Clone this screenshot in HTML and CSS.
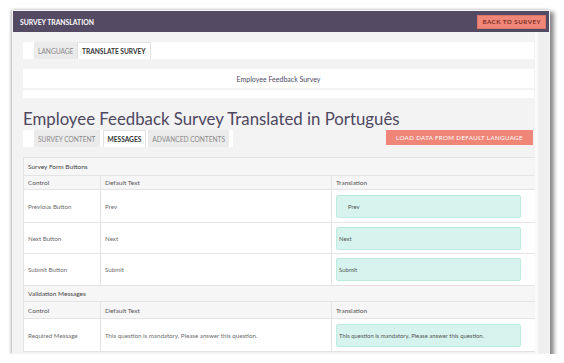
FILE: index.html
```html
<!DOCTYPE html>
<html lang="en">
<head>
  <meta charset="utf-8" />
  <meta name="viewport" content="width=device-width, initial-scale=1" />
  <title>Survey Translation</title>
  <link rel="stylesheet" href="styles.css">
</head>
<body>
  <div class="frame">
    <div class="topbar">
      <span class="title">SURVEY TRANSLATION</span>
      <button class="back">BACK TO SURVEY</button>
    </div>

    <div class="body">
      <div class="content">
        <div class="tabs">
          <div class="tab">LANGUAGE</div>
          <div class="tab active">TRANSLATE SURVEY</div>
        </div>

        <div class="survey-name">Employee Feedback Survey</div>
        <div class="blank"></div>

        <h1>Employee Feedback Survey Translated in Português</h1>

        <div class="toolbar">
          <div class="tabs sub">
            <div class="tab">SURVEY CONTENT</div>
            <div class="tab active">MESSAGES</div>
            <div class="tab">ADVANCED CONTENTS</div>
          </div>
          <button class="load">LOAD DATA FROM DEFAULT LANGUAGE</button>
        </div>

        <table class="grid">
          <colgroup>
            <col class="c1"><col class="c2"><col class="c3">
          </colgroup>
          <tr class="group g1"><td colspan="3">Survey Form Buttons</td></tr>
          <tr class="head h1"><td>Control</td><td>Default Text</td><td>Translation</td></tr>
          <tr class="r1">
            <td>Previous Button</td><td>Prev</td>
            <td><div class="field indent">Prev</div></td>
          </tr>
          <tr class="r2">
            <td>Next Button</td><td>Next</td>
            <td><div class="field">Next</div></td>
          </tr>
          <tr class="r3">
            <td>Submit Button</td><td>Submit</td>
            <td><div class="field">Submit</div></td>
          </tr>
          <tr class="group g2"><td colspan="3">Validation Messages</td></tr>
          <tr class="head h2"><td>Control</td><td>Default Text</td><td>Translation</td></tr>
          <tr class="r4">
            <td>Required Message</td><td>This question is mandatory, Please answer this question.</td>
            <td><div class="field">This question is mandatory, Please answer this question.</div></td>
          </tr>
        </table>
      </div>
      <div class="scroll"></div>
    </div>
  </div>
</body>
</html>
```

FILE: styles.css
```css
:root { --purple:#554a64; --salmon:#ef8678; --line:#e4e4e4; --text:#4b4558; --muted:#6d6d6d; }
html, body { margin:0; background:#fff; overflow:hidden; }
body { font-family: Lato, "Open Sans", sans-serif; color:var(--text); }

.frame { margin: 10px 0 0 12px; width: 536px; height: 342px; border: 1px solid #f4f4f4; overflow: hidden; background:#f3f3f3;
  box-shadow: 3px 3px 4px 1px rgba(0,0,0,0.45), -1px 0 3px rgba(0,0,0,0.25); }

.topbar { height: 21px; background: var(--purple); display:flex; align-items:center; justify-content:space-between; padding: 0 3px 0 7px; }
.title { color:#fff; font-size: 6.8px; font-weight: 700; }
button { font-family: inherit; border: 0; cursor: pointer; }
.back { background: var(--salmon); color:#7b2f26; font-size: 6.2px; font-weight: 700; letter-spacing: 0.5px; height: 14px; padding: 0 4px; border: 1px solid #d9776a; }

.body { display:flex; height: 321px; }
.content { flex: 1; padding: 10px 0 0 10px; min-width: 0; }
.scroll { width: 11px; border-left: 3px solid #fafafa; background:#efefef; margin-left: 1px; }

.tabs { display:flex; background:#fff; height: 17px; padding-left: 11px; }
.tab { font-size: 6.6px; color:#8a8a8a; background:#ebebeb; display:flex; align-items:center; padding: 0 4px; }
.tab.active { background:#fff; color:#333; font-weight: 700; border: 1px solid #e2e2e2; border-bottom: 0; }
.tabs .tab:first-child { width: 35px; }

.survey-name { margin-top: 10px; background:#fff; height: 19px; display:flex; align-items:center; justify-content:center; font-size: 7px; color:#4d4862; }
.blank { margin-top: 2px; height: 8px; background:#fff; }

h1 { margin: 9px 0 0; font-size: 16.8px; font-weight: 400; color:#4d4760; line-height: 23px; }

.toolbar { display:flex; justify-content:space-between; align-items:flex-start; padding-right: 1px; }
.tabs.sub { width: 199px; height: 17px; }
.tabs.sub .tab { margin-right: 3px; }
.tabs.sub .tab:first-child { width: auto; }
.tabs.sub .tab.active { margin-right: 2px; }
.load { background: var(--salmon); color:#fff; font-size: 6.2px; letter-spacing: 0.35px; height: 15px; width: 147px; }

.grid { margin-top: 10px; width: 513px; border-collapse: collapse; table-layout: fixed; background:#fff; }
.c1 { width: 77px; } .c2 { width: 231px; } .c3 { width: 205px; }
.grid td { border: 1px solid var(--line); font-size: 6.2px; color: var(--muted); padding: 0 4px; vertical-align: middle; }
.group td, .head td { background:#f6f6f6; color:#444; font-size: 6.5px; }
.head td { color:#555; }
.g1 { height: 18px; } .h1 { height: 14px; }
.r1 { height: 33px; } .r2 { height: 31px; } .r3 { height: 32px; }
.g2 { height: 16px; } .h2 { height: 17px; } .r4 { height: 33px; }

.field { width: 185px; height: 23px; box-sizing: border-box; background:#d6f4ed; border: 1px solid #bcebdf; border-radius: 2px; display:flex; align-items:center; padding-left: 2px; font-size: 5.9px; color:#555; }
.field.indent { padding-left: 11px; }
```
